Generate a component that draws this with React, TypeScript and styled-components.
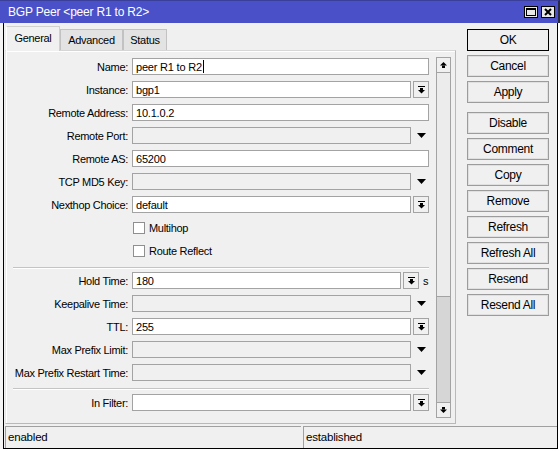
import React from 'react';
import styled, { createGlobalStyle } from 'styled-components';

const GlobalStyle = createGlobalStyle`
  html, body {
    margin: 0;
    padding: 0;
    background: #ffffff;
  }
  body {
    font-family: 'Liberation Sans', Arial, sans-serif;
    font-size: 11px;
    color: #000;
  }
`;

const Screen = styled.div`
  width: 560px;
  height: 451px;
  display: flex;
  flex-direction: column;
  overflow: hidden;
  background: #ffffff;
`;

const TitleBar = styled.div`
  height: 23px;
  box-sizing: border-box;
  display: flex;
  align-items: center;
  justify-content: space-between;
  background: #4a50c8;
  border-top: 1px solid #3a3f9a;
  border-right: 2px solid #2a2a40;
  padding: 0 3px 0 8px;
  color: #ffffff;
  font-size: 12px;
  letter-spacing: -0.2px;
`;

const TitleButtons = styled.div`
  display: flex;
  gap: 3px;
`;

const TitleButton = styled.div`
  width: 14px;
  height: 12px;
  box-sizing: border-box;
  background: #e8e8e8;
  border: 1px solid #000;
  display: flex;
  align-items: center;
  justify-content: center;
`;

const Lower = styled.div`
  display: flex;
  height: 426px;
`;

const OuterStrip = styled.div`
  width: 3px;
  background: #f4f4f4;
`;

const Window = styled.div`
  width: 555px;
  box-sizing: border-box;
  border-left: 1px solid #000;
  border-right: 1px solid #000;
  border-bottom: 1px solid #000;
  background: #f0f0f0;
  display: flex;
  flex-direction: column;
`;

const Main = styled.div`
  display: flex;
  height: 401px;
`;

const LeftSection = styled.div`
  margin-left: 1px;
  width: 451px;
  display: flex;
  flex-direction: column;
  padding-top: 3px;
`;

const Tabs = styled.div`
  display: flex;
  align-items: flex-end;
  height: 24px;
  padding-left: 1px;
`;

const Tab = styled.div<{ $active?: boolean; $w: number }>`
  width: ${(p) => p.$w}px;
  height: ${(p) => (p.$active ? 25 : 21)}px;
  box-sizing: border-box;
  margin-bottom: ${(p) => (p.$active ? -1 : 0)}px;
  background: ${(p) => (p.$active ? '#f0f0f0' : '#e3e3e3')};
  border: 1px solid ${(p) => (p.$active ? '#d0d0d0' : '#c2c2c2')};
  border-bottom: none;
  border-left-color: ${(p) => (p.$active ? '#ffffff' : '#c2c2c2')};
  display: flex;
  align-items: center;
  justify-content: center;
  padding-bottom: ${(p) => (p.$active ? 3 : 1)}px;
  font-size: 11px;
  letter-spacing: -0.3px;
  position: relative;
  z-index: ${(p) => (p.$active ? 1 : 0)};
`;

const Panel = styled.div`
  flex: 1;
  box-sizing: border-box;
  border: 1px solid #b9b9b9;
  border-top-color: #d6d6d6;
  border-left-color: #e6e6e6;
  box-shadow: inset 1px 1px 0 #ffffff;
  display: flex;
  padding: 6px 4px 5px 0;
`;

const Form = styled.div`
  flex: 1;
  padding: 1px 5px 0 0;
  display: flex;
  flex-direction: column;
  gap: 6px;
`;

const Row = styled.div`
  display: flex;
  align-items: center;
  height: 17px;
  gap: 4px;
`;

const Label = styled.div`
  width: 122px;
  text-align: right;
  white-space: nowrap;
  letter-spacing: -0.3px;
`;

const TextBox = styled.div<{ $w: number; $disabled?: boolean }>`
  width: ${(p) => p.$w}px;
  height: 17px;
  box-sizing: border-box;
  border: 1px solid #a3a3a3;
  background: ${(p) => (p.$disabled ? '#f0f0f0' : '#ffffff')};
  padding: 0 3px;
  display: flex;
  align-items: center;
  letter-spacing: -0.2px;
  white-space: nowrap;
`;

const Caret = styled.span`
  display: inline-block;
  width: 1px;
  height: 13px;
  background: #000;
  margin-left: 1px;
`;

const Controls = styled.div`
  display: flex;
  align-items: center;
  gap: 2px;
`;

const BoxButton = styled.div`
  width: 16px;
  height: 17px;
  box-sizing: border-box;
  border: 1px solid #a3a3a3;
  background: #f0f0f0;
  display: flex;
  align-items: center;
  justify-content: center;
`;

const ArrowSlot = styled.div`
  width: 16px;
  height: 17px;
  display: flex;
  align-items: center;
  justify-content: center;
`;

const Unit = styled.span`
  width: 8px;
  padding-left: 2px;
  font-size: 11px;
`;

const CheckRow = styled.div`
  display: flex;
  align-items: center;
  height: 17px;
  padding-left: 127px;
  gap: 4px;
  letter-spacing: -0.3px;
`;

const CheckBox = styled.div`
  width: 12px;
  height: 12px;
  box-sizing: border-box;
  border: 1px solid #8f8f8f;
  background: #ffffff;
`;

const Separator = styled.div<{ $top: number }>`
  height: 1px;
  margin: ${(p) => p.$top}px 0 ${(p) => -p.$top}px 7px;
  width: 416px;
  background: #c4c4c4;
  box-shadow: 0 1px 0 #ffffff;
`;

const ScrollBar = styled.div`
  width: 16px;
  display: flex;
  flex-direction: column;
  background: #dcdcdc;
`;

const ScrollButton = styled.div`
  height: 16px;
  box-sizing: border-box;
  border: 1px solid #a3a3a3;
  background: #f0f0f0;
  display: flex;
  align-items: center;
  justify-content: center;
`;

const Thumb = styled.div`
  height: 224px;
  box-sizing: border-box;
  border: 1px solid #a3a3a3;
  border-top: none;
  background: #ececec;
`;

const Track = styled.div`
  flex: 1;
  border-left: 1px solid #a3a3a3;
  border-right: 1px solid #a3a3a3;
  background: #d6d6d6;
`;

const ButtonColumn = styled.div`
  margin-left: 11px;
  padding-top: 6px;
  display: flex;
  flex-direction: column;
  gap: 4px;
`;

const ActionButton = styled.div<{ $default?: boolean; $spaced?: boolean }>`
  width: 82px;
  height: 22px;
  box-sizing: border-box;
  border: 1px solid ${(p) => (p.$default ? '#000' : '#9c9c9c')};
  box-shadow: inset 0 0 0 1px ${(p) => (p.$default ? '#f0f0f0' : '#e0e0e0')};
  background: #f0f0f0;
  margin-top: ${(p) => (p.$spaced ? 5 : 0)}px;
  display: flex;
  align-items: center;
  justify-content: center;
  font-size: 12px;
  letter-spacing: -0.3px;
`;

const StatusBar = styled.div`
  display: flex;
  gap: 2px;
  height: 22px;
  margin-top: 2px;
  padding-left: 1px;
`;

const StatusPane = styled.div<{ $w: number }>`
  width: ${(p) => p.$w}px;
  box-sizing: border-box;
  border-top: 1px solid #a0a0a0;
  border-left: 1px solid #a0a0a0;
  padding: 0 0 1px 2px;
  display: flex;
  align-items: center;
  letter-spacing: -0.2px;
  font-size: 11.5px;
`;

const DropGlyph = () => (
  <svg width="7" height="8" viewBox="0 0 7 8">
    <rect x="0" y="0" width="7" height="1" fill="#000" />
    <rect x="2" y="2" width="3" height="2" fill="#000" />
    <polygon points="0,4 7,4 3.5,7.5" fill="#000" />
  </svg>
);

const PlainArrow = () => (
  <svg width="9" height="5" viewBox="0 0 9 5">
    <polygon points="0,0 9,0 4.5,5" fill="#000" />
  </svg>
);

const UpGlyph = () => (
  <svg width="7" height="6" viewBox="0 0 7 6">
    <polygon points="0,3.5 7,3.5 3.5,0" fill="#000" />
    <rect x="2" y="3.5" width="3" height="2.5" fill="#000" />
  </svg>
);

const DownGlyph = () => (
  <svg width="7" height="6" viewBox="0 0 7 6">
    <rect x="2" y="0" width="3" height="2.5" fill="#000" />
    <polygon points="0,2.5 7,2.5 3.5,6" fill="#000" />
  </svg>
);

type FieldKind = 'text' | 'drop' | 'arrow';

const Field = ({
  label,
  value,
  kind = 'text',
  disabled,
  caret,
}: {
  label: string;
  value?: string;
  kind?: FieldKind;
  disabled?: boolean;
  caret?: boolean;
}) => (
  <Row>
    <Label>{label}</Label>
    {kind === 'text' ? (
      <TextBox $w={297} $disabled={disabled}>
        {value}
        {caret && <Caret />}
      </TextBox>
    ) : (
      <Controls>
        <TextBox $w={279} $disabled={disabled}>
          {value}
        </TextBox>
        {kind === 'drop' ? (
          <BoxButton>
            <DropGlyph />
          </BoxButton>
        ) : (
          <ArrowSlot>
            <PlainArrow />
          </ArrowSlot>
        )}
      </Controls>
    )}
  </Row>
);

const buttons = [
  'OK',
  'Cancel',
  'Apply',
  'Disable',
  'Comment',
  'Copy',
  'Remove',
  'Refresh',
  'Refresh All',
  'Resend',
  'Resend All',
];

export default function App() {
  return (
    <>
      <GlobalStyle />
      <Screen>
        <TitleBar>
          <span>BGP Peer &lt;peer R1 to R2&gt;</span>
          <TitleButtons>
            <TitleButton>
              <svg width="10" height="8" viewBox="0 0 10 8">
                <rect x="0.5" y="0.5" width="9" height="7" fill="none" stroke="#000" />
                <rect x="0" y="0" width="10" height="2" fill="#000" />
              </svg>
            </TitleButton>
            <TitleButton>
              <svg width="8" height="8" viewBox="0 0 8 8">
                <path d="M1 1 L7 7 M7 1 L1 7" stroke="#000" strokeWidth="2" />
              </svg>
            </TitleButton>
          </TitleButtons>
        </TitleBar>
        <Lower>
          <OuterStrip />
          <Window>
            <Main>
              <LeftSection>
                <Tabs>
                  <Tab $active $w={54}>General</Tab>
                  <Tab $w={63}>Advanced</Tab>
                  <Tab $w={44}>Status</Tab>
                </Tabs>
                <Panel>
                  <Form>
                    <Field label="Name:" value="peer R1 to R2" caret />
                    <Field label="Instance:" value="bgp1" kind="drop" />
                    <Field label="Remote Address:" value="10.1.0.2" />
                    <Field label="Remote Port:" kind="arrow" disabled />
                    <Field label="Remote AS:" value="65200" />
                    <Field label="TCP MD5 Key:" kind="arrow" disabled />
                    <Field label="Nexthop Choice:" value="default" kind="drop" />
                    <CheckRow>
                      <CheckBox />
                      Multihop
                    </CheckRow>
                    <CheckRow>
                      <CheckBox />
                      Route Reflect
                    </CheckRow>
                    <Separator $top={2} />
                    <Row>
                      <Label>Hold Time:</Label>
                      <Controls>
                        <TextBox $w={269}>180</TextBox>
                        <BoxButton>
                          <DropGlyph />
                        </BoxButton>
                        <Unit>s</Unit>
                      </Controls>
                    </Row>
                    <Field label="Keepalive Time:" kind="arrow" disabled />
                    <Field label="TTL:" value="255" kind="drop" />
                    <Field label="Max Prefix Limit:" kind="arrow" disabled />
                    <Field label="Max Prefix Restart Time:" kind="arrow" disabled />
                    <Separator $top={1} />
                    <Field label="In Filter:" kind="drop" />
                  </Form>
                  <ScrollBar>
                    <ScrollButton>
                      <UpGlyph />
                    </ScrollButton>
                    <Thumb />
                    <Track />
                    <ScrollButton>
                      <DownGlyph />
                    </ScrollButton>
                  </ScrollBar>
                </Panel>
              </LeftSection>
              <ButtonColumn>
                {buttons.map((b) => (
                  <ActionButton key={b} $default={b === 'OK'} $spaced={b === 'Disable'}>
                    {b}
                  </ActionButton>
                ))}
              </ButtonColumn>
            </Main>
            <StatusBar>
              <StatusPane $w={296}>enabled</StatusPane>
              <StatusPane $w={254}>established</StatusPane>
            </StatusBar>
          </Window>
        </Lower>
      </Screen>
    </>
  );
}
